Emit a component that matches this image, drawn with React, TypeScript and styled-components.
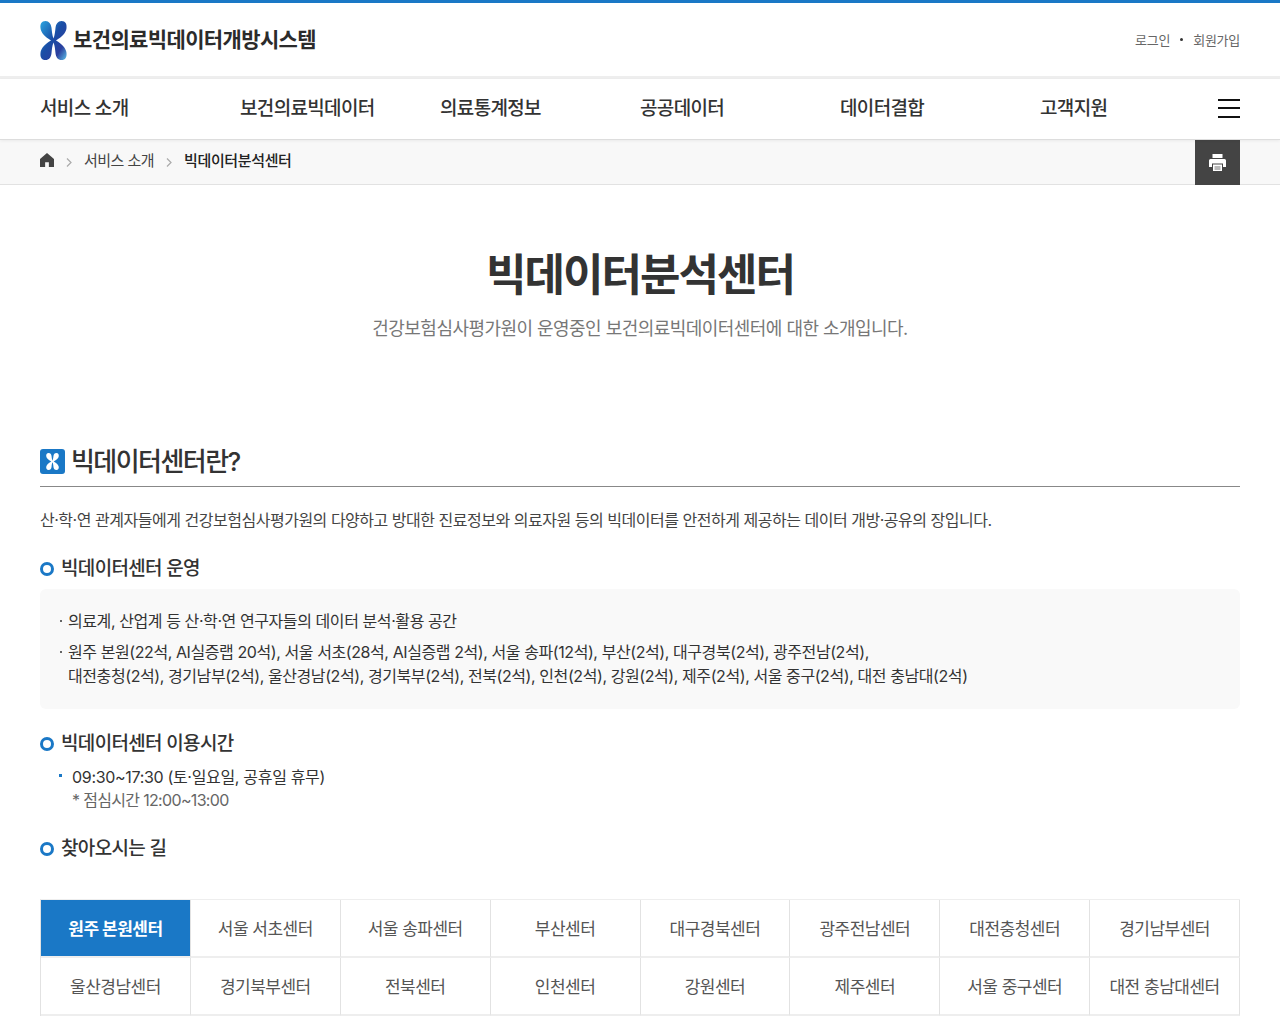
import styled, { createGlobalStyle } from "styled-components";

const FONT = `Inter, "Noto Sans CJK KR", "Noto Sans", sans-serif`;
const BLUE = "#1a78c6";

const Global = createGlobalStyle`
  html, body { margin: 0; padding: 0; background: #fff; }
  body { font-family: ${FONT}; color: #333; letter-spacing: -0.04em; }
  *, *::before, *::after { box-sizing: border-box; }
  ul, h1, h2, h3, p { margin: 0; padding: 0; list-style: none; }
`;

const Header = styled.header`
  border-top: 3px solid ${BLUE};
  height: 79px;
  border-bottom: 3px solid #eeeeee;
`;

const Inner = styled.div`
  width: 1200px;
  margin: 0 auto;
  display: flex;
  align-items: center;
`;

const TopInner = styled(Inner)`
  height: 73px;
  justify-content: space-between;
`;

const Logo = styled.a`
  display: flex;
  align-items: center;
  gap: 6px;

  svg {
    margin-top: 2px;
  }
`;

const LogoText = styled.span`
  font-size: 21px;
  font-weight: 700;
  color: #2b2b2b;
  letter-spacing: -0.03em;
  line-height: 30px;
`;

const Util = styled.div`
  display: flex;
  align-items: center;
  gap: 10px;
  font-size: 13px;
  color: #666;
  letter-spacing: -0.02em;
`;

const Dot = styled.i`
  width: 3px;
  height: 3px;
  border-radius: 50%;
  background: #333;
`;

const Nav = styled.nav`
  height: 61px;
  border-bottom: 1px solid #ddd;
  box-shadow: 0 1px 3px rgba(0, 0, 0, 0.06);
  position: relative;
`;

const NavInner = styled(Inner)`
  height: 54px;
`;

const NavItem = styled.a`
  flex: 0 0 200px;
  font-size: 19px;
  font-weight: 500;
  color: #333;
  letter-spacing: -0.035em;
`;

const Burger = styled.button`
  flex: none;
  margin: 4px 0 0 -22px;
  width: 22px;
  height: 19px;
  padding: 0;
  border: 0;
  background: none;
  display: flex;
  flex-direction: column;
  justify-content: space-between;

  i {
    display: block;
    height: 2px;
    background: #111;
  }
`;

const Crumbs = styled.div`
  height: 45px;
  background: #f8f8f8;
  border-bottom: 1px solid #e2e2e2;
`;

const CrumbInner = styled(Inner)`
  height: 44px;
  font-size: 15px;
`;

const CrumbText = styled.span<{ $current?: boolean }>`
  color: ${(p) => (p.$current ? "#222" : "#444")};
  font-weight: ${(p) => (p.$current ? 500 : 400)};
  letter-spacing: ${(p) => (p.$current ? "-0.025em" : "-0.035em")};
  margin-top: -6px;
`;

const Chevron = styled.svg`
  width: 6px;
  height: 9px;
  margin: 0 12px 0 12px;
`;

const HomeIcon = styled.svg`
  width: 14px;
  height: 14px;
  margin-top: -4px;
`;

const PrintButton = styled.button`
  margin-left: auto;
  width: 45px;
  height: 45px;
  border: 0;
  padding: 0;
  background: #444;
  display: flex;
  align-items: center;
  justify-content: center;
`;

const Main = styled.main`
  width: 1200px;
  margin: 0 auto;
`;

const Title = styled.h1`
  margin-top: 58px;
  text-align: center;
  font-size: 44px;
  line-height: 64px;
  font-weight: 700;
  color: #333;
  letter-spacing: -0.045em;
`;

const Lead = styled.p`
  margin-top: 8px;
  text-align: center;
  font-size: 18px;
  line-height: 28px;
  color: #777;
  letter-spacing: -0.03em;
`;

const SectionHead = styled.div`
  margin-top: 105px;
  height: 39px;
  display: flex;
  align-items: flex-start;
  gap: 6px;
  border-bottom: 1px solid #888;
`;

const Badge = styled.span`
  margin-top: 1px;
  width: 25px;
  height: 25px;
  border-radius: 3px;
  background: ${BLUE};
  display: flex;
  align-items: center;
  justify-content: center;
`;

const SectionTitle = styled.h2`
  font-size: 26px;
  line-height: 30px;
  font-weight: 500;
  color: #333;
  letter-spacing: -0.06em;
  margin-top: -1px;
`;

const Intro = styled.p`
  margin-top: 20px;
  font-size: 16px;
  line-height: 26px;
  color: #444;
  letter-spacing: -0.03em;
`;

const SubHead = styled.h3<{ $top: number }>`
  margin-top: ${(p) => p.$top}px;
  display: flex;
  align-items: center;
  gap: 7px;
  font-size: 19px;
  line-height: 28px;
  font-weight: 500;
  color: #333;
  letter-spacing: -0.035em;

  &::before {
    content: "";
    width: 14px;
    height: 14px;
    border-radius: 50%;
    border: 3.5px solid ${BLUE};
  }
`;

const GrayBox = styled.ul`
  margin-top: 6px;
  padding: 20px 20px 18px;
  height: 120px;
  background: #f9f9f9;
  border-radius: 6px;
`;

const BoxItem = styled.li`
  position: relative;
  padding-left: 8px;
  font-size: 16px;
  line-height: 24px;
  color: #333;
  letter-spacing: -0.026em;

  & + & {
    margin-top: 7px;
  }

  &::before {
    content: "";
    position: absolute;
    left: 0;
    top: 11px;
    width: 2px;
    height: 2px;
    background: #666;
  }
`;

const HoursList = styled.ul`
  margin-top: 8px;
  padding-left: 19px;
`;

const HoursItem = styled.li`
  position: relative;
  padding-left: 13px;
  font-size: 16px;
  line-height: 23px;
  color: #333;
  letter-spacing: -0.02em;

  &::before {
    content: "";
    position: absolute;
    left: 0;
    top: 8px;
    width: 3px;
    height: 3px;
    background: ${BLUE};
  }
`;

const HoursNote = styled.p`
  padding-left: 13px;
  font-size: 16px;
  line-height: 23px;
  color: #666;
  letter-spacing: -0.042em;
`;

const Tabs = styled.ul`
  margin-top: 36px;
  display: grid;
  grid-template-columns: repeat(8, 1fr);
  grid-auto-rows: 58px;
  border-top: 1px solid #eee;
  border-left: 1px solid #e2e2e2;
`;

const Tab = styled.li<{ $active?: boolean }>`
  display: flex;
  align-items: center;
  justify-content: center;
  padding-bottom: 2px;
  font-size: 17px;
  font-weight: ${(p) => (p.$active ? 700 : 400)};
  color: ${(p) => (p.$active ? "#fff" : "#555")};
  background: ${(p) => (p.$active ? BLUE : "#fff")};
  border-right: 1px solid #e2e2e2;
  border-bottom: 2px solid #eee;
  letter-spacing: -0.03em;
`;

const NAV = ["서비스 소개", "보건의료빅데이터", "의료통계정보", "공공데이터", "데이터결합", "고객지원"];
const CENTERS = [
  "원주 본원센터", "서울 서초센터", "서울 송파센터", "부산센터", "대구경북센터", "광주전남센터", "대전충청센터", "경기남부센터",
  "울산경남센터", "경기북부센터", "전북센터", "인천센터", "강원센터", "제주센터", "서울 중구센터", "대전 충남대센터",
];

// chromosome mark: four lobes joined at the centre
function Mark({ width, height, white }: { width: number; height: number; white?: boolean }) {
  const fill = white ? "#fff" : "url(#mark)";
  return (
    <svg width={width} height={height} viewBox="0 0 27 40" preserveAspectRatio="none">
      <defs>
        <linearGradient id="mark" x1="0" y1="0" x2="1" y2="1">
          <stop offset="0" stopColor="#2aa5e0" />
          <stop offset="0.45" stopColor="#1a4ea6" />
          <stop offset="0.75" stopColor="#2b3f9e" />
          <stop offset="1" stopColor="#5cc0e8" />
        </linearGradient>
      </defs>
      <path
        fill={fill}
        d="M5.500 0C1.500 0 0 3 .5 7.500 1 12 5 16.500 11 20 5 23.500 1 28 .5 32.500 0 37 1.500 40 5.500 40c3.500 0 5.500-3 6-7 .3-3 .7-8 2-11 1.300 3 1.700 8 2 11 .5 4 2.500 7 6 7 4 0 5.500-3 5-7.500C26 28 22 23.500 16 20c6-3.500 10-8 10.500-12.500C27 3 25.500 0 21.500 0c-3.500 0-5.500 3-6 7-.3 3-.7 8-2 11-1.300-3-1.700-8-2-11-.5-4-2.500-7-6-7z"
      />
    </svg>
  );
}

function Caret() {
  return (
    <Chevron viewBox="0 0 6 9">
      <path fill="none" stroke="#aaa" strokeWidth="1.200" d="M1 .5 5 4.500 1 8.500" />
    </Chevron>
  );
}

export default function App() {
  return (
    <>
      <Global />
      <Header>
        <TopInner>
          <Logo>
            <Mark width={27} height={39} />
            <LogoText>보건의료빅데이터개방시스템</LogoText>
          </Logo>
          <Util>
            <span>로그인</span>
            <Dot />
            <span>회원가입</span>
          </Util>
        </TopInner>
      </Header>
      <Nav>
        <NavInner>
          {NAV.map((n) => (
            <NavItem key={n}>{n}</NavItem>
          ))}
          <Burger aria-label="menu">
            <i />
            <i />
            <i />
          </Burger>
        </NavInner>
      </Nav>
      <Crumbs>
        <CrumbInner>
          <HomeIcon viewBox="0 0 15 15">
            <path fill="#444" d="M7.500 0 0 6.500V15h5.500v-5h4v5H15V6.500z" />
          </HomeIcon>
          <Caret />
          <CrumbText>서비스 소개</CrumbText>
          <Caret />
          <CrumbText $current>빅데이터분석센터</CrumbText>
          <PrintButton aria-label="print">
            <svg width="17" height="17" viewBox="0 0 17 17">
              <path fill="#fff" d="M3.500 0h10v4h-10zM1.500 5h14A1.500 1.500 0 0 1 17 6.500V13h-3V9.500H3V13H0V6.500A1.500 1.500 0 0 1 1.500 5zM4 10.500h9V17H4z" />
              <path fill="#777" d="M5.500 12.500h6v1h-6zM5.500 14.500h6v1h-6z" />
            </svg>
          </PrintButton>
        </CrumbInner>
      </Crumbs>
      <Main>
        <Title>빅데이터분석센터</Title>
        <Lead>건강보험심사평가원이 운영중인 보건의료빅데이터센터에 대한 소개입니다.</Lead>
        <SectionHead>
          <Badge>
            <Mark width={13} height={17} white />
          </Badge>
          <SectionTitle>빅데이터센터란?</SectionTitle>
        </SectionHead>
        <Intro>산·학·연 관계자들에게 건강보험심사평가원의 다양하고 방대한 진료정보와 의료자원 등의 빅데이터를 안전하게 제공하는 데이터 개방·공유의 장입니다.</Intro>
        <SubHead $top={22}>빅데이터센터 운영</SubHead>
        <GrayBox>
          <BoxItem>의료계, 산업계 등 산·학·연 연구자들의 데이터 분석·활용 공간</BoxItem>
          <BoxItem>
            원주 본원(22석, AI실증랩 20석), 서울 서초(28석, AI실증랩 2석), 서울 송파(12석), 부산(2석), 대구경북(2석), 광주전남(2석),
            <br />
            대전충청(2석), 경기남부(2석), 울산경남(2석), 경기북부(2석), 전북(2석), 인천(2석), 강원(2석), 제주(2석), 서울 중구(2석), 대전 충남대(2석)
          </BoxItem>
        </GrayBox>
        <SubHead $top={21}>빅데이터센터 이용시간</SubHead>
        <HoursList>
          <HoursItem>09:30~17:30 (토·일요일, 공휴일 휴무)</HoursItem>
          <HoursNote>* 점심시간 12:00~13:00</HoursNote>
        </HoursList>
        <SubHead $top={23}>찾아오시는 길</SubHead>
        <Tabs>
          {CENTERS.map((c, i) => (
            <Tab key={c} $active={i === 0}>
              {c}
            </Tab>
          ))}
        </Tabs>
      </Main>
    </>
  );
}
